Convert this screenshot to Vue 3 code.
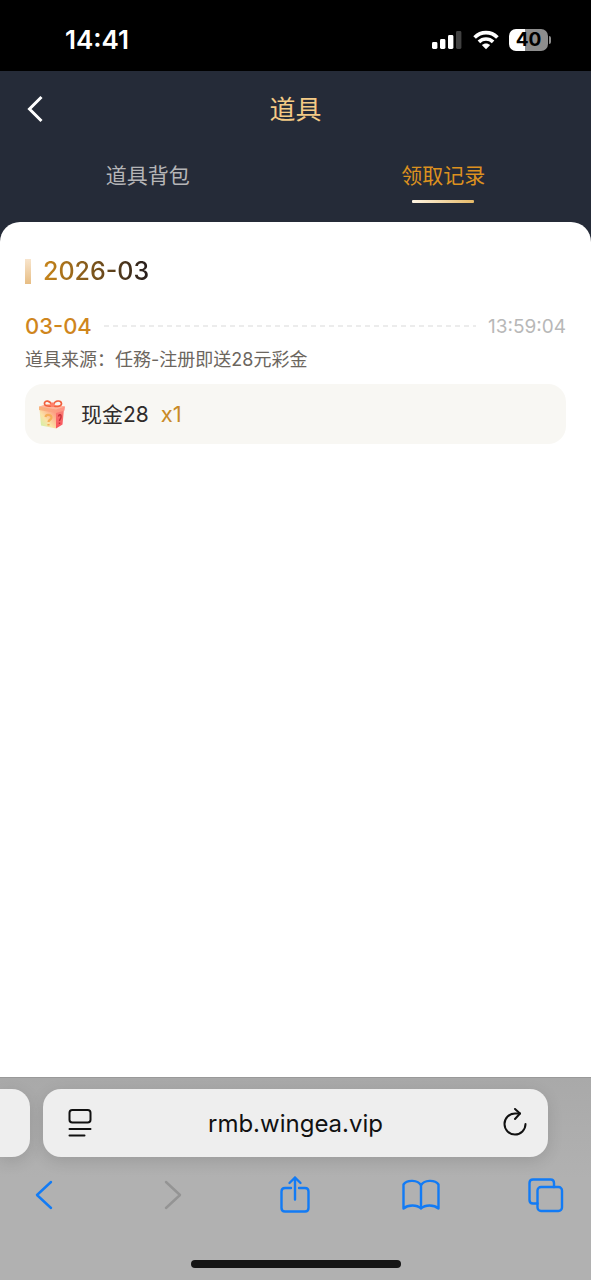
<script setup>
import { ref } from 'vue'

const tabs = ['道具背包', '领取记录']
const active = ref(1)
const address = ref('rmb.wingea.vip')

const months = [
  {
    label: '2026-03',
    records: [
      {
        date: '03-04',
        time: '13:59:04',
        source: '任務-注册即送28元彩金',
        item: '现金28',
        count: 1,
      },
    ],
  },
]
</script>

<template>
  <div class="screen">
    <div class="status">
      <span class="clock">14:41</span>
      <div class="indicators">
        <svg class="signal" width="30" height="20" viewBox="0 0 30 20" aria-hidden="true">
          <rect x="0" y="12" width="5.4" height="7" rx="1.4" fill="#fff" />
          <rect x="8" y="9" width="5.4" height="10" rx="1.4" fill="#fff" />
          <rect x="16" y="5" width="5.4" height="14" rx="1.4" fill="#fff" />
          <rect x="24" y="1" width="5.4" height="18" rx="1.4" fill="#414141" />
        </svg>
        <svg class="wifi" width="26" height="20" viewBox="0 0 26 20" aria-hidden="true">
          <g fill="none" stroke="#fff" stroke-width="3.7">
            <path d="M1.6 7.5C8 1.1 18 1.1 24.4 7.5" />
            <path d="M5.9 11.9C10 8 16 8 20.1 11.9" />
          </g>
          <path d="M8.8 15.1C11.2 12.9 14.8 12.9 17.2 15.1L13 19.3Z" fill="#fff" />
        </svg>
        <div class="battery"><span class="cell">40</span><span class="nub"></span></div>
      </div>
    </div>

    <header class="header">
      <div class="titlebar">
        <button class="back" type="button" aria-label="返回">
          <svg width="18" height="28" viewBox="0 0 18 28" aria-hidden="true">
            <path d="M15.5 2L3.5 14L15.5 26" fill="none" stroke="#fff" stroke-width="3" />
          </svg>
        </button>
        <h1>道具</h1>
      </div>
      <nav class="tabs">
        <button
          v-for="(tab, i) in tabs"
          :key="tab"
          type="button"
          class="tab"
          :class="{ active: i === active }"
          @click="active = i"
        >
          {{ tab }}
        </button>
      </nav>
    </header>

    <main class="panel">
      <section v-for="month in months" :key="month.label">
        <h2><span>{{ month.label }}</span></h2>
        <article v-for="record in month.records" :key="record.time">
          <div class="when">
            <span class="date">{{ record.date }}</span>
            <svg class="dashes" height="2" aria-hidden="true">
              <line x1="0" y1="1" x2="100%" y2="1" stroke="#ececec" stroke-width="2" stroke-dasharray="5 4" />
            </svg>
            <time>{{ record.time }}</time>
          </div>
          <p class="source">道具来源：{{ record.source }}</p>
          <div class="prize">
            <svg class="gift" width="30" height="30" viewBox="0 0 30 30" aria-hidden="true">
              <defs>
                <linearGradient id="front" x1="0" y1="1" x2="1" y2="0">
                  <stop offset="0" stop-color="#c4f5a4" />
                  <stop offset=".42" stop-color="#fbe3a8" />
                  <stop offset="1" stop-color="#ff8a78" />
                </linearGradient>
                <linearGradient id="side" x1="0" y1="0" x2="0" y2="1">
                  <stop offset="0" stop-color="#f98276" />
                  <stop offset="1" stop-color="#f9505b" />
                </linearGradient>
                <linearGradient id="lid" x1="0" y1="0" x2="1" y2="0">
                  <stop offset="0" stop-color="#f8b47c" />
                  <stop offset="1" stop-color="#ff9185" />
                </linearGradient>
              </defs>
              <path d="M2.5 10L19 13L19 29.500L4 26.500Z" fill="url(#front)" />
              <path d="M19 13L27 10L25.500 25.500L19 29.500Z" fill="url(#side)" />
              <path d="M2 7.500L12 5L28 7.500L27.500 11.500L19 14L2 11Z" fill="url(#lid)" />
              <path d="M2 7.500L19 10.500L28 7.500L12 5Z" fill="#ffb49b" />
              <g fill="none" stroke="#f0603f" stroke-width="1.700">
                <path d="M14.500 7C11 7.500 7 7 7.500 4C8 1 13 1.500 14.500 5.500" />
                <path d="M16.500 7C20 8 24.500 7.500 24.500 4.500C24 1 18 1 16.500 5.500" />
              </g>
              <rect x="13.500" y="3.500" width="4" height="4.500" rx="1.500" fill="#ff806a" />
              <path d="M8.500 18C9 15 14.500 15.500 14.500 18.500C14.500 21 11.500 20.500 11.500 23M11.500 25V26.500" fill="none" stroke="#f6ae58" stroke-width="2.200" />
              <path d="M21.500 17.500C22 15 24.500 15 24 18C24 20 22.500 20 22.500 22M22.500 23.500V25" fill="none" stroke="#c62e37" stroke-width="1.400" />
            </svg>
            <span class="name">{{ record.item }}</span>
            <span class="count">x{{ record.count }}</span>
          </div>
        </article>
      </section>
    </main>

    <footer class="browser">
      <div class="address-row">
        <div class="peek"></div>
        <div class="address">
          <button type="button" aria-label="页面菜单">
            <svg width="26" height="30" viewBox="0 0 26 30" fill="none" stroke="#111" stroke-width="2" stroke-linecap="round" aria-hidden="true">
              <rect x="2.500" y="2" width="21" height="12.500" rx="2.800" />
              <path d="M2.500 21H23.500M2.500 27.500H17.500" />
            </svg>
          </button>
          <input v-model="address" type="text" aria-label="网址" />
          <button type="button" aria-label="重新加载">
            <svg width="26" height="30" viewBox="0 0 26 30" fill="none" stroke="#111" stroke-width="2" stroke-linecap="round" stroke-linejoin="round" aria-hidden="true">
              <path d="M23.500 16A10.500 10.500 0 1 1 13 5.500H18" />
              <path d="M13 1L18 5.500L13 11" />
            </svg>
          </button>
        </div>
      </div>
      <nav class="tools">
        <button type="button" aria-label="后退">
          <svg width="40" height="40" viewBox="0 0 40 40" aria-hidden="true">
            <path d="M27 7L13 20L27 33" />
          </svg>
        </button>
        <button type="button" aria-label="前进" disabled>
          <svg width="40" height="40" viewBox="0 0 40 40" aria-hidden="true">
            <path d="M16 7L30 20L16 33" />
          </svg>
        </button>
        <button type="button" aria-label="分享">
          <svg width="40" height="40" viewBox="0 0 40 40" aria-hidden="true">
            <path d="M16 13H10Q6.500 13 6.500 16.500V33Q6.500 36.500 10 36.500H30Q33.500 36.500 33.500 33V16.500Q33.500 13 30 13H24" />
            <path d="M20 24.500V2.500M14.500 8L20 2.500L25.500 8" />
          </svg>
        </button>
        <button type="button" aria-label="书签">
          <svg width="40" height="40" viewBox="0 0 40 40" aria-hidden="true">
            <path d="M20 10.500C17 4.500 6 4.500 2.500 9.500V33.500C7 29.500 16 29.500 20 33.500C24 29.500 33 29.500 37.500 33.500V9.500C34 4.500 23 4.500 20 10.500V33.500" />
          </svg>
        </button>
        <button type="button" aria-label="标签页">
          <svg width="40" height="40" viewBox="0 0 40 40" aria-hidden="true">
            <rect x="11.500" y="12" width="24.500" height="24" rx="3.500" />
            <path d="M11.500 28.500H7Q3.500 28.500 3.500 25V8Q3.500 4.500 7 4.500H24.500Q28 4.500 28 8V12" />
          </svg>
        </button>
      </nav>
      <div class="home"></div>
    </footer>
  </div>
</template>

<style>
body {
  margin: 0;
}
</style>

<style scoped>
.screen {
  display: flex;
  flex-direction: column;
  min-height: 100vh;
  background: #252b38;
  font-family: Inter, "Noto Sans CJK SC", sans-serif;
}
.screen * {
  box-sizing: border-box;
}
button {
  display: flex;
  align-items: center;
  justify-content: center;
  margin: 0;
  padding: 0;
  border: 0;
  background: none;
  font: inherit;
}
svg {
  display: block;
  flex: none;
}

.status {
  display: flex;
  align-items: center;
  justify-content: space-between;
  height: 71px;
  padding: 8px 40px 0 65px;
  background: #000;
  color: #fff;
}
.clock {
  font-size: 26px;
  line-height: 32px;
  font-weight: 600;
}
.indicators {
  display: flex;
  align-items: center;
}
.wifi {
  margin: 0 10px 0 11px;
}
.battery {
  display: flex;
  align-items: center;
  gap: 1px;
}
.cell {
  width: 39px;
  height: 22px;
  border-radius: 7px;
  background: linear-gradient(90deg, #fff 40%, #8d8d8d 40%);
  color: #000;
  font-size: 19px;
  line-height: 22px;
  font-weight: 700;
  text-align: center;
}
.nub {
  width: 2px;
  height: 8px;
  border-radius: 0 2px 2px 0;
  background: #8d8d8d;
}

.titlebar {
  display: grid;
  grid-template-columns: 60px 1fr 60px;
  align-items: center;
  height: 76px;
}
.back {
  height: 44px;
  padding-left: 10px;
}
h1 {
  margin: 0;
  padding-top: 2px;
  color: #f5cb86;
  font-size: 26px;
  line-height: 36px;
  font-weight: 400;
  text-align: center;
}
.tabs {
  display: flex;
  height: 75px;
}
.tab {
  position: relative;
  flex: 1;
  height: 56px;
  padding-bottom: 2px;
  color: #b5b5b7;
  font-size: 21px;
}
.tab.active {
  color: #dc911f;
}
.tab.active::after {
  content: "";
  position: absolute;
  bottom: 0;
  left: 50%;
  width: 62px;
  height: 3px;
  margin-left: -31px;
  border-radius: 1px;
  background: linear-gradient(90deg, #fff5e4, #e5b967);
}

.panel {
  flex: 1;
  padding: 31px 25px;
  border-radius: 20px 20px 0 0;
  background: #fff;
}
h2 {
  display: flex;
  align-items: center;
  gap: 12px;
  margin: 0 0 21px;
  font-size: 25px;
  line-height: 36px;
  font-weight: 500;
}
h2::before {
  content: "";
  width: 6px;
  height: 25px;
  background: linear-gradient(#f8e5cd, #e7bd83);
}
h2 span {
  background: linear-gradient(90deg, #c9861a, #241c1c);
  background-clip: text;
  color: transparent;
}
.when {
  display: flex;
  align-items: center;
  gap: 12px;
  height: 32px;
}
.date {
  color: #cf861d;
  font-size: 22px;
  font-weight: 500;
}
.dashes {
  flex: 1;
  min-width: 0;
}
time {
  color: #b8b8b8;
  font-size: 19px;
}
.source {
  margin: 4px 0 10px;
  color: #6c665e;
  font-size: 18px;
  line-height: 28px;
}
.prize {
  display: flex;
  align-items: center;
  height: 60px;
  padding: 0 12px;
  border-radius: 18px;
  background: #f8f7f3;
  font-size: 21px;
}
.name {
  margin: 0 12px 0 14px;
  padding-bottom: 2px;
  color: #302c2b;
}
.count {
  color: #c98a26;
  font-size: 22px;
}

.browser {
  display: flex;
  flex-direction: column;
  height: 203px;
  padding-top: 11px;
  border-top: 1px solid #999;
  background: linear-gradient(#a9a9a9, #b1b1b1 50%);
}
.address-row {
  display: grid;
  grid-template-columns: 30px 1fr;
  gap: 13px;
  padding-right: 43px;
}
.peek,
.address {
  height: 68px;
  background: #eee;
  box-shadow: 0 4px 16px rgba(0, 0, 0, 0.12);
}
.peek {
  border-radius: 0 18px 18px 0;
}
.address {
  display: flex;
  align-items: center;
  padding: 0 16px 0 20px;
  border-radius: 18px;
}
.address button {
  width: 34px;
  height: 44px;
}
.address input {
  flex: 1;
  min-width: 0;
  padding: 0 4px 0 0;
  border: 0;
  outline: 0;
  background: none;
  color: #111;
  font: inherit;
  font-size: 24px;
  text-align: center;
}
.tools {
  display: flex;
  justify-content: space-between;
  padding: 16px 23px 0 22px;
}
.tools button {
  width: 44px;
  height: 44px;
}
.tools svg {
  fill: none;
  stroke: #127bf5;
  stroke-width: 2.4;
  stroke-linecap: round;
  stroke-linejoin: round;
}
.tools button:disabled svg {
  stroke: #949494;
}
.home {
  width: 210px;
  height: 8px;
  margin: auto auto 12px;
  border-radius: 4px;
  background: #151515;
}
</style>
